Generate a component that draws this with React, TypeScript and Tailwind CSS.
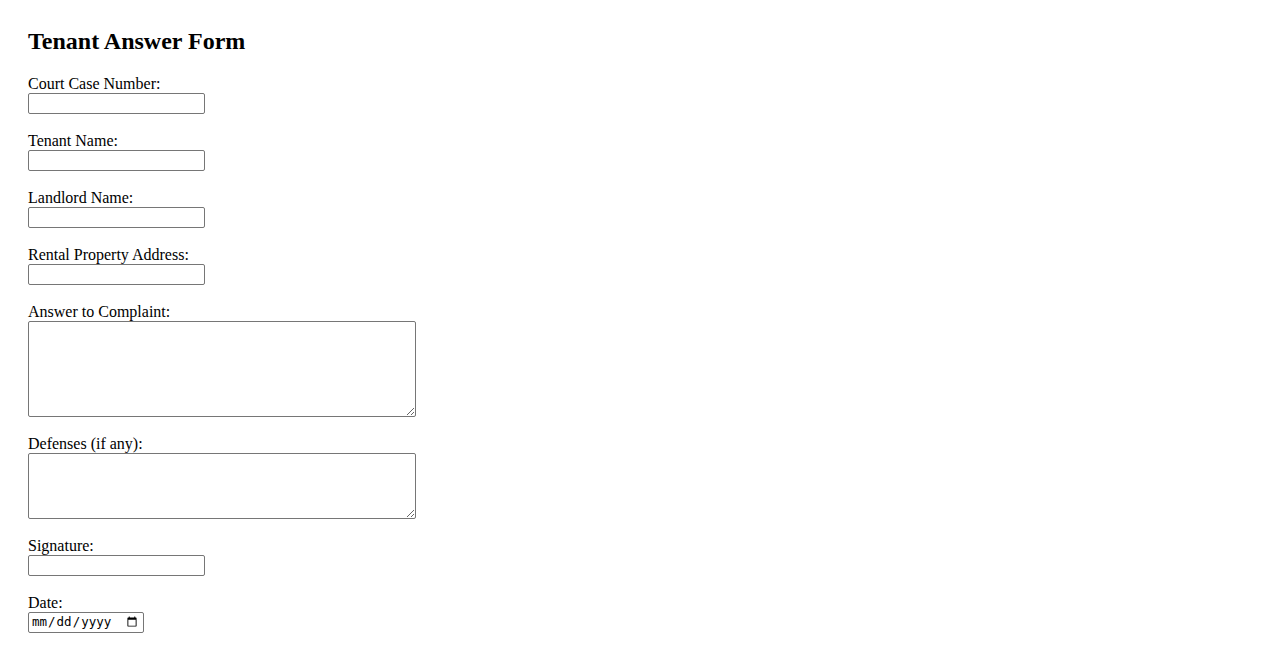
import React from "react";

const serif = { fontFamily: '"Liberation Serif", "Times New Roman", serif' };

function Field({ label, children }: { label: string; children: React.ReactNode }) {
  return (
    <div className="mb-[18px]">
      <label className="block text-[16px] leading-[18px] text-black">{label}</label>
      {children}
    </div>
  );
}

const inputCls =
  "block w-[177px] h-[21px] border border-[#767676] rounded-[2px] bg-white px-[2px] py-[1px] text-[13.33px] outline-none";
const areaCls =
  "block w-[388px] border border-[#767676] rounded-[2px] bg-white px-[2px] py-[2px] text-[13.33px] outline-none";

export default function App() {
  return (
    <div className="min-h-screen bg-white pt-[27px] pl-[28px] text-black" style={serif}>
      <h2 className="text-[24px] leading-[28px] font-bold mb-[20px]">Tenant Answer Form</h2>
      <form>
        <Field label="Court Case Number:">
          <input type="text" className={inputCls} />
        </Field>
        <Field label="Tenant Name:">
          <input type="text" className={inputCls} />
        </Field>
        <Field label="Landlord Name:">
          <input type="text" className={inputCls} />
        </Field>
        <Field label="Rental Property Address:">
          <input type="text" className={inputCls} />
        </Field>
        <Field label="Answer to Complaint:">
          <textarea className={`${areaCls} h-[96px]`} />
        </Field>
        <Field label="Defenses (if any):">
          <textarea className={`${areaCls} h-[66px]`} />
        </Field>
        <Field label="Signature:">
          <input type="text" className={inputCls} />
        </Field>
        <Field label="Date:">
          <input
            type="date"
            className="block w-[116px] h-[21px] border border-[#767676] rounded-[2px] bg-white pl-[2px] pr-[3px] py-0 text-[12.5px] outline-none"
            style={{ fontFamily: '"DejaVu Sans Mono", "Liberation Mono", monospace' }}
          />
        </Field>
      </form>
    </div>
  );
}
